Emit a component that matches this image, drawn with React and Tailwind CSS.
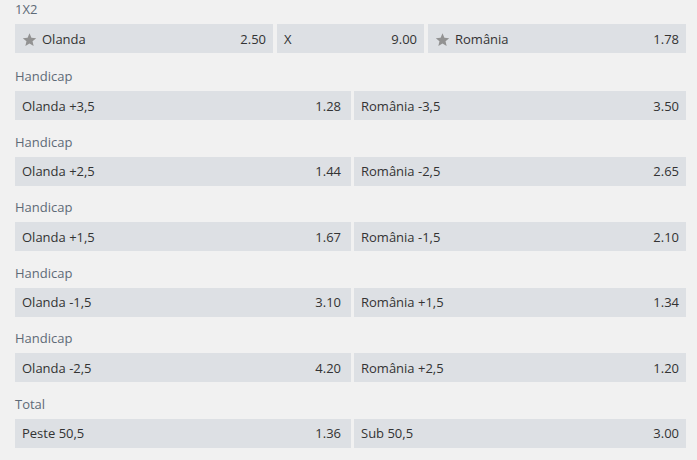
const markets = [
  ['Handicap', [['Olanda +3,5', '1.28'], ['România -3,5', '3.50']]],
  ['Handicap', [['Olanda +2,5', '1.44'], ['România -2,5', '2.65']]],
  ['Handicap', [['Olanda +1,5', '1.67'], ['România -1,5', '2.10']]],
  ['Handicap', [['Olanda -1,5', '3.10'], ['România +1,5', '1.34']]],
  ['Handicap', [['Olanda -2,5', '4.20'], ['România +2,5', '1.20']]],
  ['Total', [['Peste 50,5', '1.36'], ['Sub 50,5', '3.00']]],
]

const Star = () => (
  <svg width="15" height="14" viewBox="0 0 24 23" className="mr-[5px] shrink-0">
    <path
      d="M12 0.5l3.1 7.3 7.9.7-6 5.2 1.8 7.8L12 17.4l-6.8 4.1 1.8-7.8-6-5.2 7.9-.7z"
      fill="#929292"
    />
  </svg>
)

const Odd = ({ name, price, star, wide }) => (
  <div
    className={
      'flex items-center h-[29px] bg-[#dde0e4] pl-[7px] pt-[2px] text-[13px] text-[#333] ' +
      (wide ? 'pr-[10px]' : 'pr-[7px]')
    }
  >
    {star && <Star />}
    <span className="flex-1">{name}</span>
    <span>{price}</span>
  </div>
)

const Label = ({ children }) => (
  <div className="h-[24px] leading-[19px] text-[13px] text-[#5e6a77]">{children}</div>
)

export default function App() {
  return (
    <div
      className="w-[697px] h-[460px] bg-[#f1f1f1] pl-[15px] pr-[11px] overflow-hidden"
      style={{ fontFamily: '"Open Sans", sans-serif' }}
    >
      <div>
        <Label>1X2</Label>
        <div className="grid grid-cols-[258px_147px_1fr] gap-1">
          <Odd name="Olanda" price="2.50" star />
          <Odd name="X" price="9.00" />
          <Odd name="România" price="1.78" star />
        </div>
      </div>
      {markets.map(([title, odds], i) => (
        <div key={i} className={i === 0 ? 'mt-[14px]' : 'mt-[12.5px]'}>
          <Label>{title}</Label>
          <div className="grid grid-cols-[336px_1fr] gap-[3px]">
            <Odd name={odds[0][0]} price={odds[0][1]} wide />
            <Odd name={odds[1][0]} price={odds[1][1]} />
          </div>
        </div>
      ))}
    </div>
  )
}
